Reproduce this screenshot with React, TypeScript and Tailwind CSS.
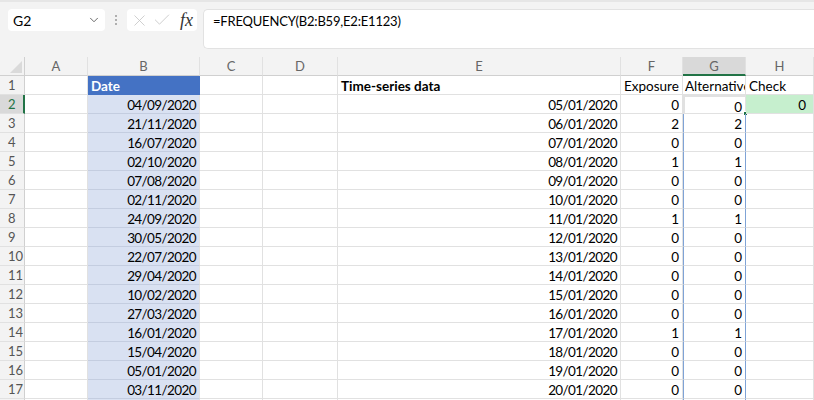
import React from "react";
import { X, Check, ChevronDown } from "lucide-react";

const COLS = ["A", "B", "C", "D", "E", "F", "G", "H"];
const WIDTHS = ["w-[63px]", "w-[112px]", "w-[63px]", "w-[75px]", "w-[283px]", "w-[62px]", "w-[63px]", "flex-1"];

const bDates = [
  "04/09/2020", "21/11/2020", "16/07/2020", "02/10/2020", "07/08/2020", "02/11/2020",
  "24/09/2020", "30/05/2020", "22/07/2020", "29/04/2020", "10/02/2020", "27/03/2020",
  "16/01/2020", "15/04/2020", "05/01/2020", "03/11/2020", "",
];
const counts = [0, 2, 0, 1, 0, 0, 1, 0, 0, 0, 0, 0, 1, 0, 0, 0];

function eDate(i: number) {
  const d = String(i + 5).padStart(2, "0");
  return `${d}/01/2020`;
}

function Cell({ i, children, className = "" }: { i: number; children?: React.ReactNode; className?: string }) {
  return (
    <div
      className={`${WIDTHS[i]} relative h-[19px] shrink-0 overflow-hidden whitespace-nowrap border-r border-b border-[#e1e1e1] px-[3px] pt-[1px] leading-[18px] ${className}`}
    >
      {children}
    </div>
  );
}

function Row({ n }: { n: number }) {
  const sel = n === 2;
  const idx = n - 2;
  const data = n >= 2 && idx < 16;
  return (
    <div className="flex">
      <div
        className={`flex h-[19px] w-[25px] shrink-0 items-center border-b border-[#e1e1e1] pl-[8px] pt-[1px] text-[13px] ${
          sel ? "border-r-2 border-r-[#217346] bg-[#d9d9d9] text-[#217346]" : "border-r border-r-[#d0d0d0] bg-[#f3f3f3] text-[#555]"
        }`}
      >
        {n < 18 ? n : ""}
      </div>
      <Cell i={0} />
      {n === 1 ? (
        <Cell i={1} className="border-b-[#4472c4] border-r-[#4472c4] bg-[#4472c4] font-bold text-white">Date</Cell>
      ) : (
        <Cell i={1} className="border-b-[#c4cde0] bg-[#d9e1f2] text-right tracking-[-0.6px]">{bDates[idx]}</Cell>
      )}
      <Cell i={2} />
      <Cell i={3} />
      <Cell i={4} className={n === 1 ? "font-bold" : "text-right tracking-[-0.6px]"}>
        {n === 1 ? "Time-series data" : data ? eDate(idx) : ""}
      </Cell>
      <Cell i={5} className={n === 1 ? "overflow-visible" : "text-right"}>
        {n === 1 ? "Exposure" : data ? counts[idx] : ""}
      </Cell>
      {n === 1 ? (
        <Cell i={6} className="pl-[2px]">Alternative</Cell>
      ) : sel ? (
        <Cell i={6} className="overflow-visible border-2 border-[#217346] pt-0 text-right leading-[16px]">
          {counts[idx]}
          <span className="absolute -bottom-[3px] -right-[3px] h-[5px] w-[5px] border border-white bg-[#217346]" />
        </Cell>
      ) : (
        <Cell i={6} className="border-x border-x-[#7fa3d6] text-right">{data ? counts[idx] : ""}</Cell>
      )}
      <Cell i={7} className={sel ? "bg-[#c6efce] pr-[7px] text-right" : ""}>
        {n === 1 ? "Check" : sel ? "0" : ""}
      </Cell>
    </div>
  );
}

export default function App() {
  return (
    <div className="h-[400px] w-[814px] overflow-hidden bg-white text-[13.5px] text-black [font-family:Lato,'Open_Sans',sans-serif]">
      <div className="h-[57px] border-t-2 border-[#e6e6e6] bg-[#f3f3f3] pt-[7px]">
        <div className="flex items-start">
          <div className="ml-[8px] flex h-[22px] w-[97px] items-center justify-between rounded-[4px] bg-white pl-[5px] pr-[4px] text-[14px]">
            <span>G2</span>
            <ChevronDown size={14} strokeWidth={1.5} className="text-[#555]" />
          </div>
          <div className="flex h-[22px] w-[22px] items-center justify-center">
            <span className="flex flex-col gap-[2px]">
              <span className="h-[2px] w-[2px] rounded-full bg-[#999]" />
              <span className="h-[2px] w-[2px] rounded-full bg-[#999]" />
              <span className="h-[2px] w-[2px] rounded-full bg-[#999]" />
            </span>
          </div>
          <div className="flex h-[22px] w-[70px] items-center gap-[3px] rounded-[4px] bg-white pl-[3px] text-[#c4c4c4]">
            <X size={19} strokeWidth={1} />
            <Check size={20} strokeWidth={1} />
            <span className="ml-[5px] text-[18px] leading-[18px] italic text-[#333] [font-family:'Liberation_Serif',serif]">fx</span>
          </div>
          <div className="ml-[6px] h-[40px] flex-1 rounded-l-[5px] border border-r-0 border-[#e2e2e2] bg-white pl-[9px] pt-[1px] text-[13px] leading-[20px] tracking-[-0.2px]">
            =FREQUENCY(B2:B59,E2:E1123)
          </div>
        </div>
      </div>
      <div className="flex h-[19px] bg-[#f3f3f3] text-[13px] text-[#666]">
        <div className="relative w-[25px] shrink-0 border-b border-r border-[#d0d0d0]">
          <div className="absolute bottom-[2px] right-[2px] h-0 w-0 border-b-[12px] border-l-[12px] border-b-[#dadada] border-l-transparent" />
        </div>
        {COLS.map((c, i) => (
          <div
            key={c}
            className={`${WIDTHS[i]} flex shrink-0 items-center justify-center border-r border-[#e1e1e1] pt-[2px] ${
              c === "G" ? "border-b-2 border-b-[#217346] bg-[#d9d9d9]" : "border-b border-b-[#d0d0d0]"
            }`}
          >
            {c}
          </div>
        ))}
      </div>
      {Array.from({ length: 18 }, (_, k) => (
        <Row key={k} n={k + 1} />
      ))}
    </div>
  );
}
